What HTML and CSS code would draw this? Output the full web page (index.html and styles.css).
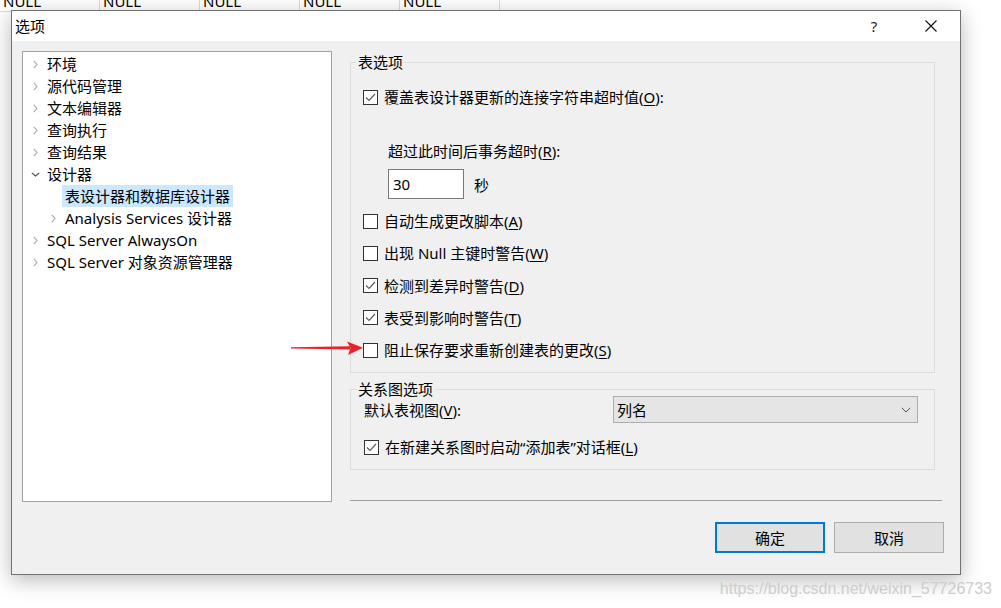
FILE: index.html
```html
<!DOCTYPE html>
<html lang="zh-CN">
<head>
<meta charset="utf-8">
<title>选项</title>
<link rel="stylesheet" href="styles.css">
</head>
<body>
<div class="datagrid">
  <div class="cell">NULL</div>
  <div class="cell">NULL</div>
  <div class="cell">NULL</div>
  <div class="cell">NULL</div>
  <div class="cell">NULL</div>
</div>

<div class="dialog">
  <div class="titlebar">
    <span class="title">选项</span>
    <span class="tb-btn help">?</span>
    <span class="tb-btn close">
      <svg width="12" height="12" viewBox="0 0 12 12"><path d="M0.5 0.5 L11.5 11.5 M11.5 0.5 L0.5 11.5" stroke="#111" stroke-width="1.1" fill="none"/></svg>
    </span>
  </div>
  <div class="body">
    <div class="main">
      <div class="tree">
        <div class="tree-row"><span class="tw"><svg width="5" height="9" viewBox="0 0 5 9"><polyline points="0.8,0.8 4,4.5 0.8,8.2" class="chev-r"/></svg></span><span class="label">环境</span></div>
        <div class="tree-row"><span class="tw"><svg width="5" height="9" viewBox="0 0 5 9"><polyline points="0.8,0.8 4,4.5 0.8,8.2" class="chev-r"/></svg></span><span class="label">源代码管理</span></div>
        <div class="tree-row"><span class="tw"><svg width="5" height="9" viewBox="0 0 5 9"><polyline points="0.8,0.8 4,4.5 0.8,8.2" class="chev-r"/></svg></span><span class="label">文本编辑器</span></div>
        <div class="tree-row"><span class="tw"><svg width="5" height="9" viewBox="0 0 5 9"><polyline points="0.8,0.8 4,4.5 0.8,8.2" class="chev-r"/></svg></span><span class="label">查询执行</span></div>
        <div class="tree-row"><span class="tw"><svg width="5" height="9" viewBox="0 0 5 9"><polyline points="0.8,0.8 4,4.5 0.8,8.2" class="chev-r"/></svg></span><span class="label">查询结果</span></div>
        <div class="tree-row"><span class="tw"><svg width="9" height="5" viewBox="0 0 9 5"><polyline points="0.8,0.8 4.5,4 8.2,0.8" class="chev-d"/></svg></span><span class="label">设计器</span></div>
        <div class="tree-row l1"><span class="tw"></span><span class="label selected">表设计器和数据库设计器</span></div>
        <div class="tree-row l1"><span class="tw"><svg width="5" height="9" viewBox="0 0 5 9"><polyline points="0.8,0.8 4,4.5 0.8,8.2" class="chev-r"/></svg></span><span class="label">Analysis Services 设计器</span></div>
        <div class="tree-row"><span class="tw"><svg width="5" height="9" viewBox="0 0 5 9"><polyline points="0.8,0.8 4,4.5 0.8,8.2" class="chev-r"/></svg></span><span class="label">SQL Server AlwaysOn</span></div>
        <div class="tree-row"><span class="tw"><svg width="5" height="9" viewBox="0 0 5 9"><polyline points="0.8,0.8 4,4.5 0.8,8.2" class="chev-r"/></svg></span><span class="label">SQL Server 对象资源管理器</span></div>
      </div>

      <div class="right">
        <div class="group g1">
          <span class="legend">表选项</span>
          <div class="cb-row">
            <span class="cb"><svg width="13" height="13" viewBox="0 0 13 13"><polyline points="2,6.5 5,9.5 11,3" class="tick"/></svg></span>
            <span>覆盖表设计器更新的连接字符串超时值(<u>O</u>):</span>
          </div>
          <div class="sub-label">超过此时间后事务超时(<u>R</u>):</div>
          <div class="input-row">
            <span class="textbox">30</span>
            <span class="unit">秒</span>
          </div>
          <div class="cb-list">
            <div class="cb-row"><span class="cb"></span><span>自动生成更改脚本(<u>A</u>)</span></div>
            <div class="cb-row"><span class="cb"></span><span>出现 Null 主键时警告(<u>W</u>)</span></div>
            <div class="cb-row"><span class="cb"><svg width="13" height="13" viewBox="0 0 13 13"><polyline points="2,6.5 5,9.5 11,3" class="tick"/></svg></span><span>检测到差异时警告(<u>D</u>)</span></div>
            <div class="cb-row"><span class="cb"><svg width="13" height="13" viewBox="0 0 13 13"><polyline points="2,6.5 5,9.5 11,3" class="tick"/></svg></span><span>表受到影响时警告(<u>T</u>)</span></div>
            <div class="cb-row"><span class="cb"></span><span>阻止保存要求重新创建表的更改(<u>S</u>)</span></div>
          </div>
        </div>

        <div class="group g2">
          <span class="legend">关系图选项</span>
          <div class="select-row">
            <span>默认表视图(<u>V</u>):</span>
            <span class="select">
              <span>列名</span>
              <svg width="10" height="6" viewBox="0 0 10 6"><polyline points="0.8,0.8 5,5 9.2,0.8" class="chev-s"/></svg>
            </span>
          </div>
          <div class="cb-row mt13">
            <span class="cb"><svg width="13" height="13" viewBox="0 0 13 13"><polyline points="2,6.5 5,9.5 11,3" class="tick"/></svg></span>
            <span>在新建关系图时启动“添加表”对话框(<u>L</u>)</span>
          </div>
        </div>

        <div class="separator"></div>
      </div>
    </div>

    <div class="buttons">
      <button class="btn primary">确定</button>
      <button class="btn">取消</button>
    </div>
  </div>
</div>

<svg class="arrow" width="80" height="20" viewBox="0 0 80 20">
  <path d="M1 7.2 L60 6.2 L60 9.4 L1 8.4 Z" fill="#e8222b"/>
  <path d="M57 1.5 L73 7.8 L58 15 L60.5 8 Z" fill="#e8222b"/>
</svg>

<div class="watermark">https://blog.csdn.net/weixin_57726733</div>
</body>
</html>
```

FILE: styles.css
```css
* { box-sizing: border-box; }

html, body { margin: 0; padding: 0; }

body {
  width: 1001px;
  height: 608px;
  position: relative;
  overflow: hidden;
  background: #ffffff;
  font-family: "Noto Sans", "Noto Sans CJK SC", sans-serif;
  font-size: 15px;
  color: #000;
}

u { text-underline-offset: 2px; text-decoration-thickness: 1px; }

/* background data grid */
.datagrid {
  display: flex;
  margin-top: -10px;
  width: 500px;
}
.cell {
  width: 100px;
  height: 22px;
  line-height: 22px;
  padding-left: 3px;
  border-right: 1px solid #dcdcdc;
  border-bottom: 1px solid #dcdcdc;
}

/* dialog window */
.dialog {
  position: absolute;
  left: 11px;
  top: 10px;
  width: 950px;
  height: 565px;
  border: 1px solid #727272;
  background: #f0f0f0;
  box-shadow: 0 5px 20px rgba(0, 0, 0, 0.28);
  display: flex;
  flex-direction: column;
}

.titlebar {
  height: 30px;
  flex: none;
  background: #ffffff;
  display: flex;
  align-items: center;
  padding-left: 3px;
  padding-right: 6px;
}
.title { flex: 1; line-height: 30px; }
.tb-btn {
  width: 46px;
  height: 30px;
  display: flex;
  align-items: center;
  justify-content: center;
}
.help { color: #222; font-size: 15px; margin-right: 11px; }

.body {
  flex: 1;
  display: flex;
  flex-direction: column;
  padding: 10px 16px 0 10px;
}

.main {
  display: flex;
  gap: 18px;
  height: 451px;
}

/* tree */
.tree {
  width: 310px;
  flex: none;
  border: 1px solid #a2a2a2;
  background: #fff;
  padding-top: 1px;
}
.tree-row {
  height: 22px;
  display: flex;
  align-items: center;
  padding-left: 3px;
  white-space: nowrap;
}
.tree-row.l1 { padding-left: 21px; }
.tw {
  width: 18px;
  height: 22px;
  flex: none;
  display: flex;
  align-items: center;
  justify-content: center;
}
.label { margin-left: 3px; line-height: 22px; }
.label.selected {
  margin-left: 0;
  padding: 0 3px;
  background: #cce8ff;
}
.chev-r { fill: none; stroke: #a8a8a8; stroke-width: 1.1; }
.chev-d { fill: none; stroke: #4a4a4a; stroke-width: 1.1; }

/* right side */
.right {
  flex: 1;
  display: flex;
  flex-direction: column;
}

.group {
  position: relative;
  border: 1px solid #dcdcdc;
  margin-right: 9px;
}
.legend {
  position: absolute;
  left: 5px;
  top: -11px;
  padding: 0 2px;
  line-height: 20px;
  background: #f0f0f0;
}

.g1 {
  margin-top: 11px;
  height: 311px;
  padding: 23px 0 0 12px;
}
.g2 {
  margin-top: 16px;
  padding: 6px 16px 11px 13px;
}

.cb-row {
  height: 22px;
  display: flex;
  align-items: center;
  gap: 6px;
  white-space: nowrap;
  line-height: 22px;
}
.cb {
  width: 15px;
  height: 15px;
  flex: none;
  border: 1px solid #333333;
  background: #ffffff;
  display: flex;
  align-items: center;
  justify-content: center;
}
.tick { fill: none; stroke: #5a5a5a; stroke-width: 1.15; }

.sub-label {
  margin-top: 32px;
  padding-left: 25px;
  height: 22px;
  line-height: 22px;
}
.input-row {
  margin-top: 7px;
  padding-left: 25px;
  height: 30px;
  display: flex;
  align-items: center;
}
.textbox {
  width: 76px;
  height: 30px;
  border: 1px solid #7a7a7a;
  background: #fff;
  padding-left: 4px;
  line-height: 28px;
}
.unit { margin-left: 10px; }

.cb-list {
  margin-top: 11px;
  display: flex;
  flex-direction: column;
  gap: 10.25px;
}

.select-row {
  height: 27px;
  display: flex;
  align-items: center;
  justify-content: space-between;
}
.select {
  width: 305px;
  height: 27px;
  border: 1px solid #adadad;
  background: #e5e5e5;
  display: flex;
  align-items: center;
  justify-content: space-between;
  padding: 0 6px 0 3px;
}
.chev-s { fill: none; stroke: #555; stroke-width: 1; }
.mt13 { margin-top: 13px; }

.separator {
  margin-top: 30px;
  margin-right: 2px;
  height: 1px;
  background: #a0a0a0;
}

/* buttons */
.buttons {
  display: flex;
  justify-content: flex-end;
  gap: 9px;
  margin-top: 20px;
}
.btn {
  width: 110px;
  height: 31px;
  background: #e1e1e1;
  border: 1px solid #adadad;
  font-family: "Noto Sans", "Noto Sans CJK SC", sans-serif;
  font-size: 15px;
  color: #000;
  padding: 0;
}
.btn.primary { border: 2px solid #0078d7; }

/* overlays */
.arrow {
  position: absolute;
  left: 290px;
  top: 340px;
  pointer-events: none;
}

.watermark {
  position: absolute;
  right: 9px;
  top: 579px;
  font-family: "Liberation Sans", sans-serif;
  font-size: 16px;
  line-height: 20px;
  color: #cdcdcd;
  white-space: nowrap;
}
```
